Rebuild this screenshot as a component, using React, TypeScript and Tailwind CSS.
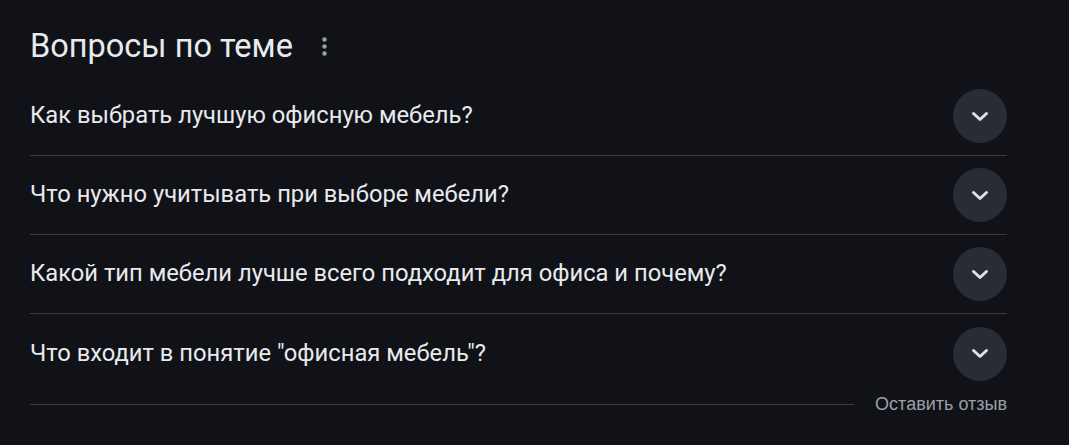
const questions = [
  "Как выбрать лучшую офисную мебель?",
  "Что нужно учитывать при выборе мебели?",
  "Какой тип мебели лучше всего подходит для офиса и почему?",
  'Что входит в понятие "офисная мебель"?',
];

function Chevron() {
  return (
    <svg width="18" height="11" viewBox="0 0 18 11" fill="none">
      <path d="M2.5 2.5L9 8.5L15.5 2.5" stroke="#dfe0ec" strokeWidth="3" strokeLinecap="round" strokeLinejoin="round" />
    </svg>
  );
}

function Dots() {
  return (
    <svg width="5" height="19" viewBox="0 0 5 19" fill="#9aa0a6">
      <circle cx="2.5" cy="2.5" r="2.2" />
      <circle cx="2.5" cy="9.5" r="2.2" />
      <circle cx="2.5" cy="16.5" r="2.2" />
    </svg>
  );
}

export default function App() {
  return (
    <div className="w-[1069px] h-[445px] bg-[#101218] font-['Roboto',sans-serif]">
      <div className="w-[977px] ml-[30px] pt-[26px]">
        {/* Header */}
        <div className="flex items-center h-[40px] mb-[11px]">
          <h2 className="text-[32.5px] leading-[40px] text-[#e8eaed] font-normal">Вопросы по теме</h2>
          <button className="ml-[29px] mt-[1px] flex items-center">
            <Dots />
          </button>
        </div>

        {/* Questions */}
        {questions.map((q, i) => (
          <div
            key={i}
            className={`flex items-center justify-between h-[79px] ${i < questions.length - 1 ? "border-b border-[#3a3b40]" : ""}`}
          >
            <span className="text-[23.75px] text-[#e8eaed]">{q}</span>
            <button className="w-[54px] h-[54px] rounded-full bg-[#2a2c35] flex items-center justify-center">
              <Chevron />
            </button>
          </div>
        ))}

        {/* Footer */}
        <div className="flex items-center h-[22px]">
          <div className="flex-1 h-px bg-[#3a3b40]" />
          <span className="pl-[21px] text-[18px] text-[#9aa0a6] font-['Liberation_Sans',sans-serif]">Оставить отзыв</span>
        </div>
      </div>
    </div>
  );
}
